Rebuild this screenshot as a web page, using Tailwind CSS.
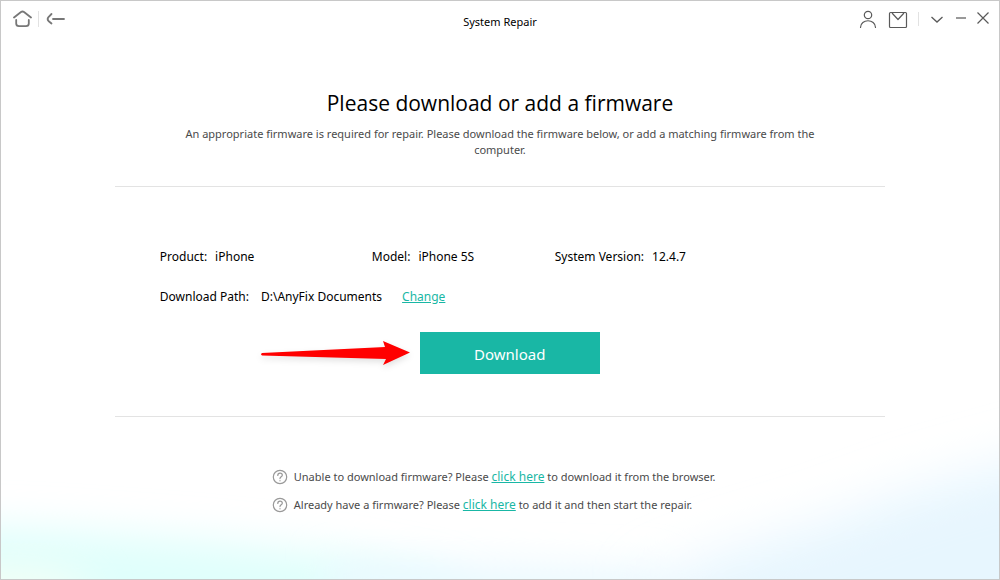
<!DOCTYPE html>
<html lang="en">
<head>
<meta charset="utf-8">
<meta name="viewport" content="width=device-width, initial-scale=1">
<title>System Repair</title>
<script src="https://cdn.jsdelivr.net/npm/@tailwindcss/browser@4"></script>
</head>
<body class="bg-white font-['Noto_Sans','Open_Sans',sans-serif] text-black">
<div class="relative isolate flex min-h-screen flex-col overflow-hidden border border-[#c8c8c8]">
  <!-- soft coloured backdrop -->
  <svg class="absolute inset-0 -z-10 h-full w-full" viewBox="0 0 1000 580" preserveAspectRatio="none" aria-hidden="true">
    <defs>
      <filter id="soft" x="-50%" y="-50%" width="200%" height="200%"><feGaussianBlur stdDeviation="20"/></filter>
      <filter id="softer" x="-50%" y="-50%" width="200%" height="200%"><feGaussianBlur stdDeviation="26"/></filter>
    </defs>
    <path d="M-80 524L60 530L200 540L330 554L440 576L560 660H-80Z" fill="#e0fffc" filter="url(#soft)"/>
    <ellipse cx="0" cy="592" rx="90" ry="24" fill="#f4fff6" filter="url(#soft)"/>
    <path d="M330 562L480 564L660 570L680 640H330Z" fill="#ebf9ff" filter="url(#soft)"/>
    <path d="M650 584L720 556L820 526L920 490L1100 440V680H650Z" fill="#e7f6fe" filter="url(#softer)"/>
  </svg>

  <header class="grid h-10 grid-cols-[1fr_auto_1fr] items-start text-[#5a5a5a]">
    <nav class="flex items-center pt-2 pl-3">
      <button type="button" aria-label="Home">
        <svg class="h-5 w-5" viewBox="0 0 20 20" fill="none" stroke="#777" stroke-width="1.8" stroke-linecap="round" stroke-linejoin="round"><path d="M1 8.500L8 3Q9.500 2 11 3L18 8.500M3.200 11V14.500Q3.200 17.200 6 17.200H13Q15.800 17.200 15.800 14.500V11"/></svg>
      </button>
      <span class="mr-1.5 ml-[5px] h-4 w-px bg-[#e2e2e2]"></span>
      <button type="button" aria-label="Back">
        <svg class="h-5 w-5" viewBox="0 0 20 20" fill="none" stroke="#777" stroke-width="1.8" stroke-linecap="round"><path d="M6.500 5L3.500 8Q1.800 10 3.500 12L6.500 14.500M8 10H19"/></svg>
      </button>
    </nav>
    <h1 class="pt-[13px] text-[11px] leading-4 text-black">System Repair</h1>
    <div class="flex items-center justify-end pt-2 pr-1.5">
      <button type="button" aria-label="Account">
        <svg class="h-5 w-5" viewBox="0 0 20 20" fill="none" stroke="currentColor" stroke-width="1.200" stroke-linecap="round"><circle cx="10" cy="6" r="3.700"/><path d="M2.500 18.500C2.500 9.500 17.500 9.500 17.500 18.500"/></svg>
      </button>
      <button type="button" aria-label="Messages" class="ml-2.5">
        <svg class="h-5 w-5" viewBox="0 0 20 20" fill="none" stroke="currentColor" stroke-width="1.200" stroke-linejoin="round"><rect x="1.500" y="3.500" width="17" height="15" rx="1"/><path d="M4 4L10 10.500L16 4"/></svg>
      </button>
      <span class="mr-2 ml-2.5 h-3.5 w-px bg-[#e2e2e2]"></span>
      <button type="button" aria-label="More">
        <svg class="h-5 w-5" viewBox="0 0 20 20" fill="none" stroke="currentColor" stroke-width="1.300"><path d="M4.500 8L10 13L15.500 8"/></svg>
      </button>
      <button type="button" aria-label="Minimize" class="ml-1">
        <svg class="h-5 w-5" viewBox="0 0 20 20" fill="none" stroke="#999" stroke-width="2"><path d="M5 9H15"/></svg>
      </button>
      <button type="button" aria-label="Close" class="ml-0.5">
        <svg class="h-5 w-5" viewBox="0 0 20 20" fill="none" stroke="currentColor" stroke-width="1.200"><path d="M4.500 3.500L15.500 14.500M15.500 3.500L4.500 14.500"/></svg>
      </button>
    </div>
  </header>

  <main class="mx-auto w-[77.2%]">
    <section class="pt-[46px] pb-7 text-center">
      <h2 class="font-['Open_Sans',sans-serif] text-[21px] leading-8">Please download or add a firmware</h2>
      <p class="mx-auto mt-[7px] max-w-[660px] text-[11px] leading-4 text-[#4a4a4a]">An appropriate firmware is required for repair. Please download the firmware below, or add a matching firmware from the computer.</p>
    </section>

    <section class="border-y border-[#e3e3e3] px-[45px] pt-[60px] pb-[42px] text-xs leading-5">
      <dl class="grid grid-cols-[212px_183px_1fr] gap-y-5">
        <div class="flex gap-2"><dt>Product:</dt><dd>iPhone</dd></div>
        <div class="flex gap-2"><dt>Model:</dt><dd>iPhone 5S</dd></div>
        <div class="flex gap-2"><dt>System Version:</dt><dd>12.4.7</dd></div>
        <div class="col-span-3 flex"><dt>Download Path:</dt><dd class="ml-3">D:\AnyFix Documents</dd><dd class="ml-5"><a href="#change" class="text-[#19b7a5] underline">Change</a></dd></div>
      </dl>
      <div class="mt-[25px] flex items-center gap-2.5 pl-[100px]">
        <svg class="h-10 w-[150px] drop-shadow-md" viewBox="0 0 150 40" aria-hidden="true"><path d="M2 20L125 14L123 8L150 19.500L123 32L126 26L2 22.500Q0 21.300 2 20Z" fill="red"/></svg>
        <button type="button" class="h-[42px] w-[180px] bg-[#19b7a5] pt-0.5 text-[15px] text-white">Download</button>
      </div>
    </section>

    <section class="flex flex-col gap-2 pt-[50px] pl-[157px] text-[11px] leading-5 text-[#4a4a4a]">
      <p class="flex items-center gap-1.5">
        <svg class="h-4 w-4" viewBox="0 0 16 16" fill="none" stroke="#999" stroke-width="1.200" stroke-linecap="round" aria-hidden="true"><circle cx="8" cy="8" r="6.700"/><path d="M5.800 6.400C5.800 3.400 10.300 3.600 10.300 6.200C10.300 7.800 8 7.900 8 9.600M8 11.700V11.800"/></svg>
        <span>Unable to download firmware? Please <a href="#browser" class="text-xs leading-5 text-[#19b7a5] underline">click here</a> to download it from the browser.</span>
      </p>
      <p class="flex items-center gap-1.5">
        <svg class="h-4 w-4" viewBox="0 0 16 16" fill="none" stroke="#999" stroke-width="1.200" stroke-linecap="round" aria-hidden="true"><circle cx="8" cy="8" r="6.700"/><path d="M5.800 6.400C5.800 3.400 10.300 3.600 10.300 6.200C10.300 7.800 8 7.900 8 9.600M8 11.700V11.800"/></svg>
        <span>Already have a firmware? Please <a href="#add" class="text-xs leading-5 text-[#19b7a5] underline">click here</a> to add it and then start the repair.</span>
      </p>
    </section>
  </main>
</div>
</body>
</html>
